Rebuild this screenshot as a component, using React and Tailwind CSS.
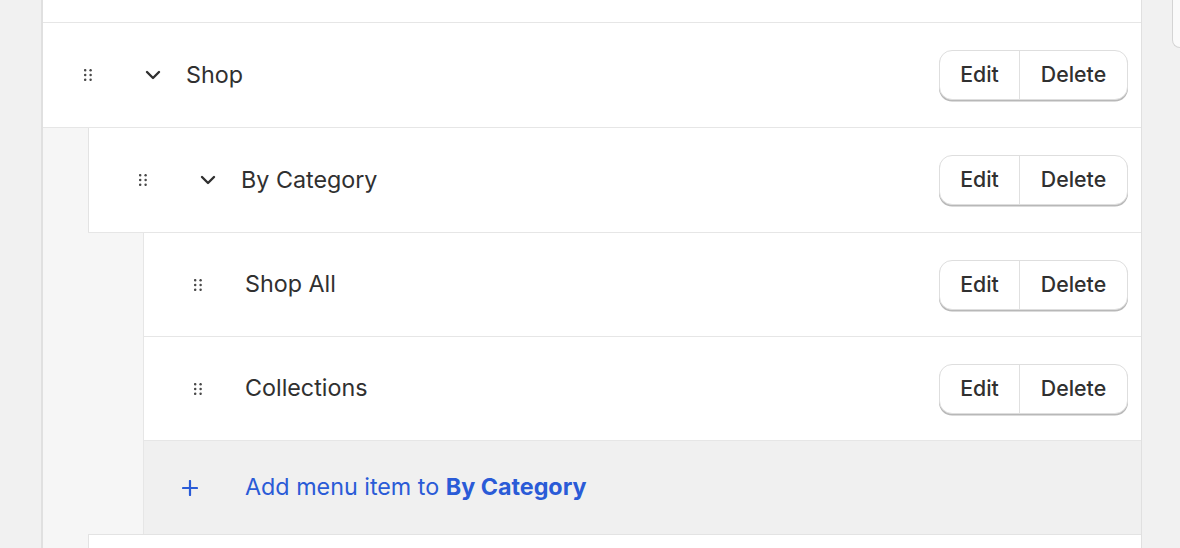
import React from "react";

const Handle = () => (
  <svg width="8" height="12" viewBox="0 0 8 12" className="shrink-0">
    {[1.2, 6.6].map((x) =>
      [1.2, 6, 10.8].map((y) => (
        <circle key={`${x}-${y}`} cx={x} cy={y} r="1.25" fill="#4a4a4a" />
      ))
    )}
  </svg>
);

const Chevron = () => (
  <svg width="16" height="10" viewBox="0 0 16 10" className="shrink-0">
    <path d="M2 2 L8 8 L14 2" fill="none" stroke="#303030" strokeWidth="2.4" strokeLinecap="round" strokeLinejoin="round" />
  </svg>
);

const Plus = () => (
  <svg width="16" height="16" viewBox="0 0 16 16" className="shrink-0">
    <path d="M8 1 V15 M1 8 H15" fill="none" stroke="#2a5bd7" strokeWidth="2.2" strokeLinecap="round" />
  </svg>
);

const Buttons = () => (
  <div className="ml-auto flex h-[50px] rounded-[13px] border border-[#dedede] bg-white shadow-[0_1.5px_0_#b8b8b8] text-[21.3px] font-medium text-[#303030]">
    <div className="flex w-[80px] items-center justify-center border-r border-[#e0e0e0]">Edit</div>
    <div className="flex w-[107px] items-center justify-center">Delete</div>
  </div>
);

const Row = ({ pl, chevron, label, h = "h-[104px]" }) => (
  <div className={`flex items-center pr-[13px] ${h} ${pl}`}>
    <Handle />
    {chevron ? (
      <>
        <div className="ml-[53px]"><Chevron /></div>
        <span className="ml-[25px] text-[23.3px] text-[#303030]">{label}</span>
      </>
    ) : (
      <span className="ml-[43px] text-[23.3px] text-[#303030]">{label}</span>
    )}
    <Buttons />
  </div>
);

export default function App() {
  return (
    <div
      className="flex h-[548px] w-[1180px] overflow-hidden bg-[#f1f1f1]"
      style={{ fontFamily: "Inter, 'Noto Sans', sans-serif" }}
    >
      <div className="ml-[41px] flex w-[1101px] flex-col border-l-2 border-r border-[#e0e0e0] bg-white">
        <div className="h-[22px] shrink-0" />
        <div className="shrink-0 border-t border-[#e6e6e6]">
          <Row pl="pl-[41px]" chevron label="Shop" />
          <div className="flex border-t border-[#e6e6e6]">
            <div className="w-[45px] shrink-0 bg-[#f6f6f6]" />
            <div className="flex flex-1 flex-col">
              <div className="border-l border-[#e3e3e3] bg-white">
                <Row pl="pl-[50px]" chevron label="By Category" />
              </div>
              <div className="flex border-t border-[#e6e6e6]">
                <div className="w-[55px] shrink-0 bg-[#f6f6f6]" />
                <div className="flex flex-1 flex-col border-l border-[#e6e6e6] bg-white">
                  <Row pl="pl-[50px]" h="h-[103px]" label="Shop All" />
                  <div className="border-t border-[#e6e6e6]">
                    <Row pl="pl-[50px]" h="h-[103px]" label="Collections" />
                  </div>
                  <div className="flex h-[94px] items-center border-t border-[#e6e6e6] bg-[#f0f0f0] pl-[38px]">
                    <Plus />
                    <span className="ml-[47px] text-[23.3px] text-[#2a5bd7]">
                      Add menu item to <span className="font-bold">By Category</span>
                    </span>
                  </div>
                </div>
              </div>
              <div className="h-[104px] border-l border-t border-[#e3e3e3] bg-white" />
            </div>
          </div>
        </div>
      </div>
      <div className="ml-[30px] h-[48px] flex-1 rounded-bl-[12px] border-b border-l border-[#d4d4d4] bg-[#fafafa]" />
    </div>
  );
}
